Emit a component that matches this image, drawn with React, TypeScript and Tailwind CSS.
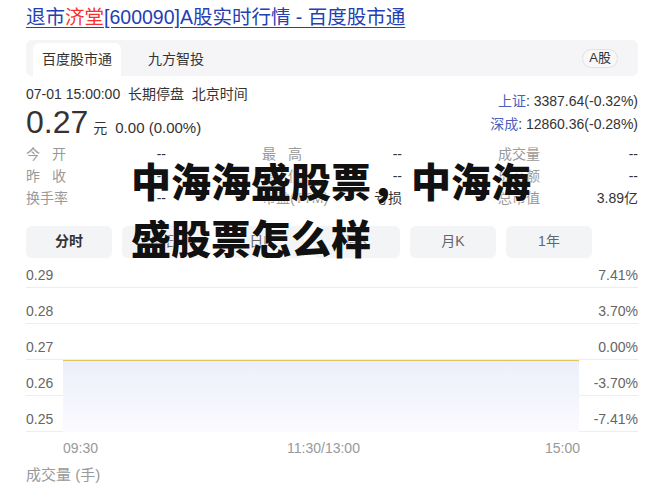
import React from "react";

const stats = [
  [
    { label: ["今", "开"], value: "--" },
    { label: ["最", "高"], value: "--" },
    { label: ["成交量"], value: "--" },
  ],
  [
    { label: ["昨", "收"], value: "--" },
    { label: ["最", "低"], value: "--" },
    { label: ["成交额"], value: "--" },
  ],
  [
    { label: ["换手率"], value: "--" },
    { label: ["市盈(TTM)"], value: "亏损" },
    { label: ["总市值"], value: "3.89亿" },
  ],
];

const tabs = ["分时", "五日", "日K", "周K", "月K", "1年"];

const yRows = [
  { left: "0.29", right: "7.41%" },
  { left: "0.28", right: "3.70%" },
  { left: "0.27", right: "0.00%" },
  { left: "0.26", right: "-3.70%" },
  { left: "0.25", right: "-7.41%" },
];

export default function App() {
  return (
    <div className="relative w-[660px] h-[491px] overflow-hidden bg-white font-['Liberation_Sans','Noto_Sans_CJK_SC',sans-serif] text-[#333]">
      <div className="pl-[26px] pr-[22px] pt-[5px]">
        {/* Title */}
        <h1 className="text-[19.5px] leading-[25px] text-[#2440b3] underline underline-offset-[3px]">
          退市<span className="text-[#f73131]">济堂</span>[600090]A股实时行情 - 百度股市通
        </h1>

        {/* Source tabs */}
        <div className="mt-[10px] h-[36px] w-[612px] rounded-md bg-[#f5f5f7] flex items-end pl-[7px] pr-[20px]">
          <div className="h-[33px] w-[88px] rounded-t-md bg-white flex items-center justify-center text-[14px] text-[#333]">
            百度股市通
          </div>
          <div className="h-[33px] ml-[27px] flex items-center text-[14px] text-[#333]">九方智投</div>
          <div className="ml-auto self-center h-[19px] px-[6px] rounded-full border border-[#e2e2e2] bg-[#f8f8f8] flex items-center text-[13px] text-[#333]">
            A股
          </div>
        </div>

        {/* Quote header */}
        <div className="flex justify-between mt-[10px]">
          <div>
            <div className="text-[14px] leading-[16px]">07-01 15:00:00&nbsp; 长期停盘&nbsp; 北京时间</div>
            <div className="flex items-baseline mt-[3px]">
              <span className="text-[32px] leading-[34px] text-[#333]">0.27</span>
              <span className="ml-[5px] text-[14px]">元</span>
              <span className="ml-[8px] text-[15px]">0.00 (0.00%)</span>
            </div>
          </div>
          <div className="text-right text-[14px] leading-[23px] pt-[4px]">
            <div>
              <span className="text-[#4a5fbf]">上证</span>: 3387.64(-0.32%)
            </div>
            <div>
              <span className="text-[#4a5fbf]">深成</span>: 12860.36(-0.28%)
            </div>
          </div>
        </div>

        {/* Stats grid */}
        <div className="mt-[4px] flex flex-col text-[14px]">
          {stats.map((row, i) => (
            <div key={i} className="h-[22px] flex items-center gap-[96px]">
              {row.map((cell, j) => (
                <div key={j} className="w-[140px] flex justify-between">
                  {cell.label.length === 2 ? (
                    <span className="w-[40px] flex justify-between text-[#999]">
                      <span>{cell.label[0]}</span>
                      <span>{cell.label[1]}</span>
                    </span>
                  ) : (
                    <span className="text-[#999]">{cell.label[0]}</span>
                  )}
                  <span className="text-[#333]">{cell.value}</span>
                </div>
              ))}
            </div>
          ))}
        </div>

        {/* Period tabs */}
        <div className="mt-[16px] flex gap-[10px]">
          {tabs.map((t, i) => (
            <div
              key={t}
              className={
                i === 0
                  ? "w-[86px] h-[32px] rounded-md bg-[#f3f4f6] flex items-center justify-center text-[14px] font-bold text-[#333]"
                  : "w-[86px] h-[32px] rounded-md bg-[#f3f4f6] flex items-center justify-center text-[14px] text-[#666]"
              }
            >
              {t}
            </div>
          ))}
        </div>

        {/* Chart */}
        <div className="relative mt-[6px] w-[612px]">
          {yRows.map((r, i) => (
            <div
              key={r.left}
              className={
                i === 0
                  ? "h-[24px] flex items-end justify-between pb-[5px] border-b border-[#eeeeee] text-[14px] leading-[14px] text-[#666]"
                  : "h-[36px] flex items-end justify-between pb-[5px] border-b border-[#eeeeee] text-[14px] leading-[14px] text-[#666]"
              }
            >
              <span>{r.left}</span>
              <span>{r.right}</span>
            </div>
          ))}
          <div className="absolute left-[37px] top-[96px] w-[516px] h-[72px] border-t border-[#e2c55a] bg-gradient-to-b from-[#eceffb] to-[#fbfbfe]" />
          <div className="relative mt-[9px] h-[14px] text-[14px] leading-[14px] text-[#999]">
            <span className="absolute left-[37px]">09:30</span>
            <span className="absolute left-[261px]">11:30/13:00</span>
            <span className="absolute left-[519px]">15:00</span>
          </div>
        </div>

        <div className="mt-[11px] text-[15px] leading-[18px] text-[#999]">成交量 (手)</div>
      </div>

      {/* Overlay headline */}
      <div className="absolute left-[131px] top-[152px] w-[420px] text-[40px] leading-[57px] font-black text-[#111] font-['Noto_Sans_CJK_SC',sans-serif] [text-shadow:0_0_2px_#fff,0_0_2px_#fff]">
        中海海盛股票，中海海盛股票怎么样
      </div>
    </div>
  );
}
